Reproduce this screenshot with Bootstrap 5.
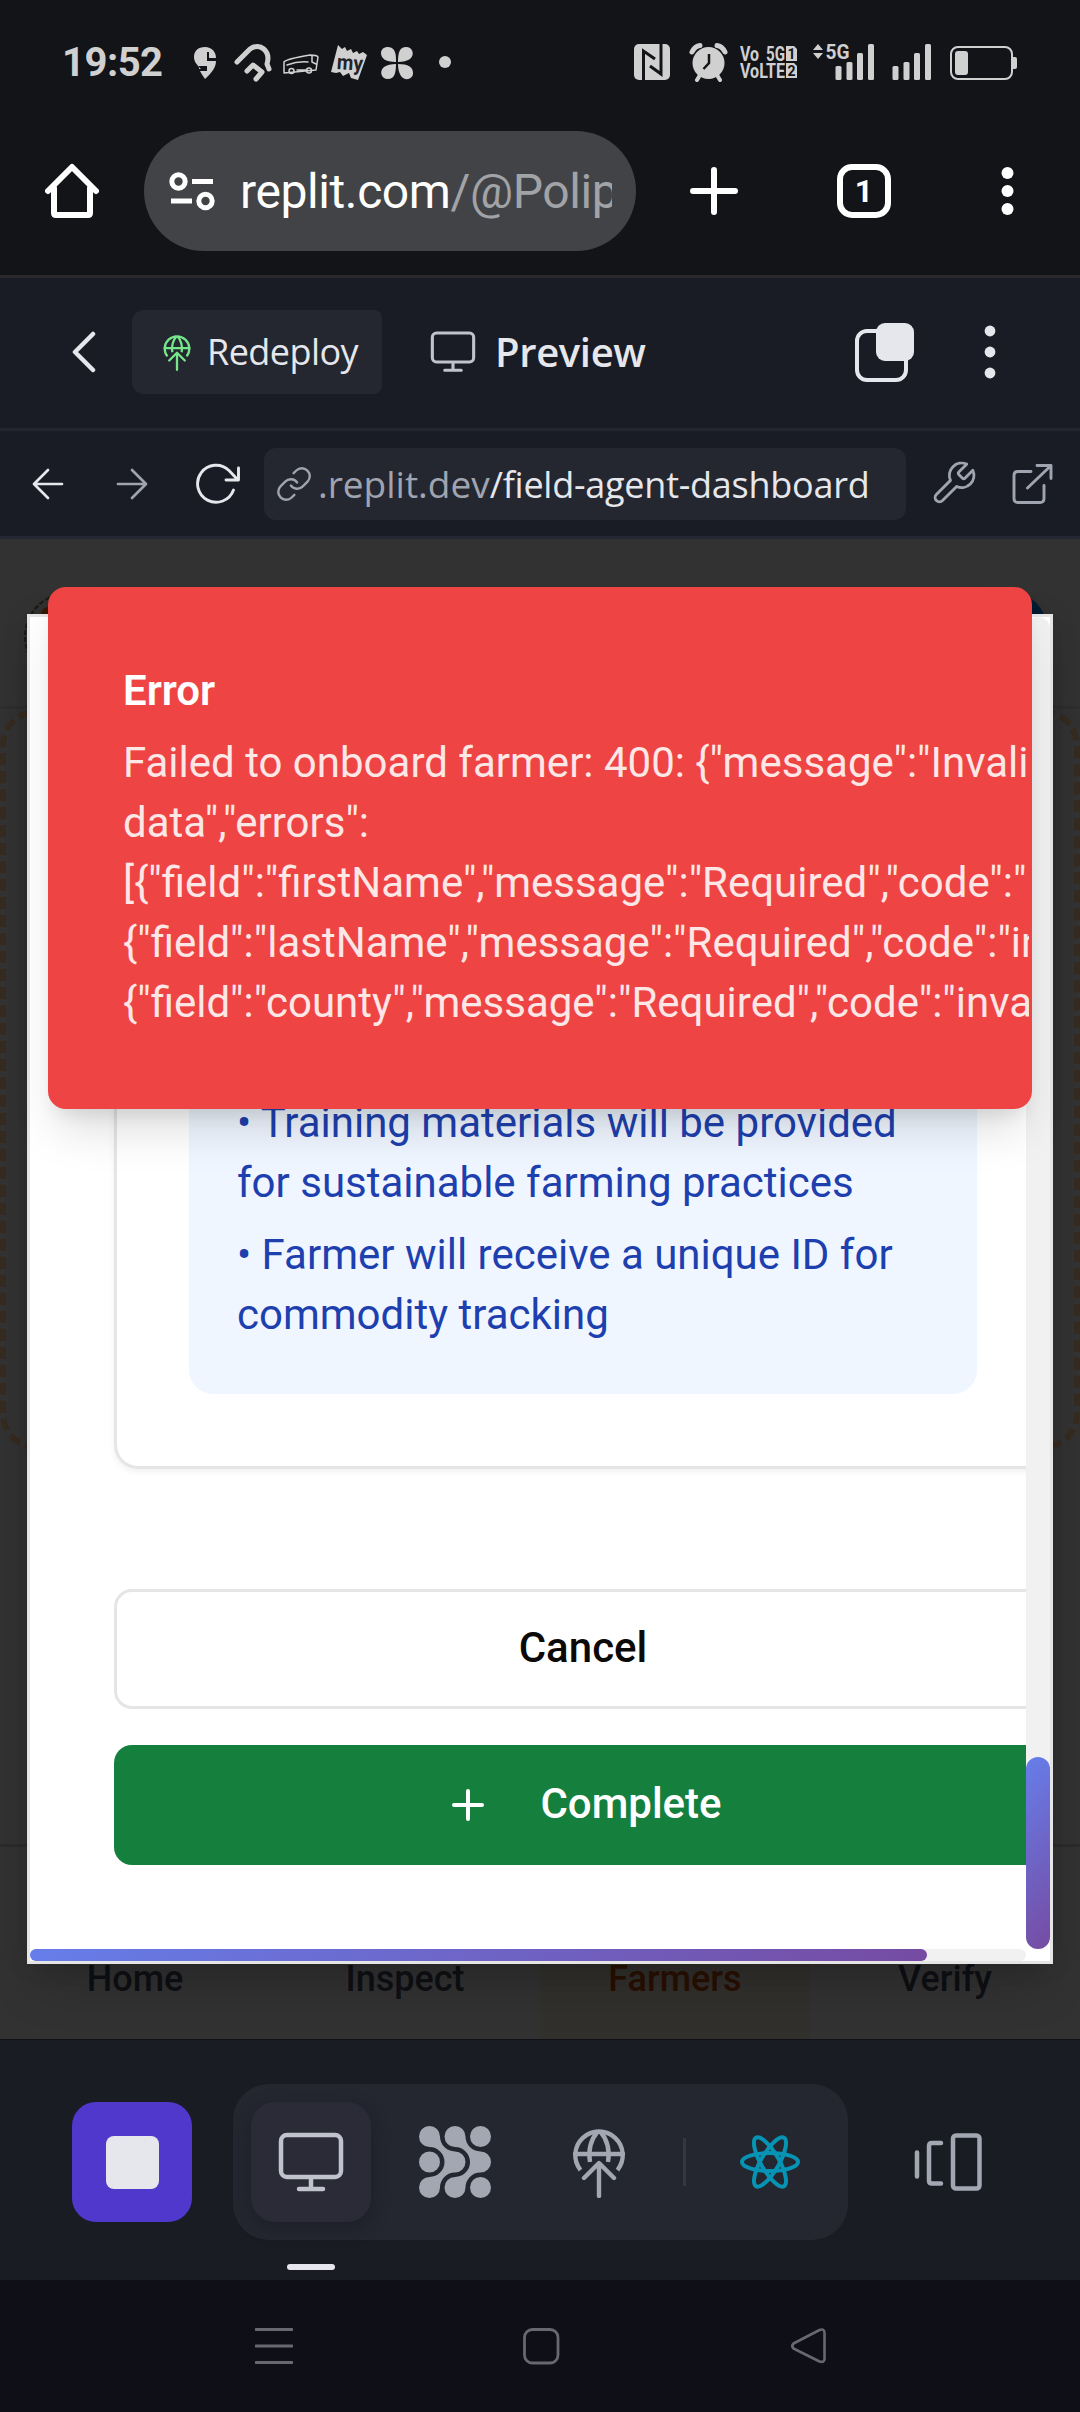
<!DOCTYPE html>
<html lang="en">
<head>
<meta charset="utf-8">
<meta name="viewport" content="width=device-width, initial-scale=1">
<title>Field agent dashboard preview</title>
<link rel="stylesheet" href="https://cdn.jsdelivr.net/npm/bootstrap@5.3.0/dist/css/bootstrap.min.css">
<style>
  body { width: 1080px; height: 2412px; overflow: hidden; background: #131418; font-family: Roboto, "Liberation Sans", sans-serif; }
  svg { display: block; flex: none; }
  .ln { fill: none; stroke: currentColor; stroke-linecap: round; stroke-linejoin: round; }
  /* system status bar */
  .statusbar { height: 120px; padding: 42px 60px 0 62px; color: #d0d0d0; }
  .clock { font-size: 40px; font-weight: 700; line-height: 42px; width: 119px; letter-spacing: -.5px; }
  .sys-icons { gap: 8px; }
  /* browser bar */
  .urlbar { height: 155px; padding: 0 66px 13px 45px; color: #fff; }
  .pill { width: 492px; height: 120px; margin-left: 45px; padding: 0 24px; border-radius: 60px; background: #424347; }
  .pill-text { margin-left: 24px; font-size: 48px; width: 372px; letter-spacing: -.4px; line-height: 64px; padding-top: 1px; }
  .pill-text span { color: #a2a3a7; }
  .gap-plus { margin-left: 54px; }
  .tab-count { width: 54px; height: 54px; border: 6px solid #fff; border-radius: 15px; font: 700 32px/43px Roboto, sans-serif; margin-left: 99px; }
  /* workspace bars */
  .plex { font-family: "Open Sans", "Noto Sans", sans-serif; }
  .tools { background: #1a1c25; color: #e6e7ec; }
  .tool-head { height: 153px; border-top: 3px solid #2a2a2d; padding: 0 84px 2px 72px; }
  .redeploy { width: 250px; height: 84px; margin-left: 35px; padding-left: 31px; border-radius: 12px 8px 8px 12px; background: #242730; font-size: 36px; letter-spacing: -.55px; gap: 16px; }
  .green { color: #76e68a; }
  .pv { font-size: 40px; font-weight: 600; letter-spacing: -.35px; margin-left: 19px; }
  .gap-dots { margin-left: 69px; }
  .tool-url { height: 111px; border-top: 3px solid #242731; border-bottom: 3px solid #242731; padding: 0 27px 0 31px; }
  .muted-c { color: #a0a4b0; }
  .gap-fwd { margin-left: 51px; }
  .gap-reload { margin-left: 45px; }
  .addr { width: 642px; height: 72px; margin-left: 23px; padding-left: 11px; border-radius: 12px; background: #242730; font-size: 37px; }
  .addr-text { margin-left: 5px; white-space: nowrap; }
  .host { letter-spacing: 0; }
  .path { font-size: 36px; letter-spacing: -.25px; }
  .gap-wrench { margin-left: 23px; }
  /* previewed app */
  .stage { height: 1500px; background: #323232; overflow: hidden; }
  .app-head { height: 170px; border-bottom: 3px solid #2e2e2e; padding: 51px 24px 0; }
  .app-head svg { overflow: visible; }
  .dashed { height: 741px; border: 6px dashed #362b20; border-radius: 36px; background: #333; }
  .app-nav { height: 195px; border-top: 3px solid #2b2b2b; font-size: 36px; font-weight: 500; color: #0e1014; }
  .app-nav > div { padding-top: 105px; line-height: 54px; }
  .app-nav .on { background: #31302d; color: #290f02; }
  .dlg { left: 27px; top: 75px; width: 1026px; height: 1350px; border: 3px solid #e5e5e5; background: #fff; box-shadow: 0 30px 45px -9px rgba(0,0,0,.18), 0 0 24px rgba(0,0,0,.1); }
  .dlg-body { width: 996px; height: 1332px; padding: 0 0 84px 84px; overflow: hidden; }
  .dlg-body > * { width: 938px; flex: none; }
  .panel { height: 780px; border: 3px solid #e5e5e5; border-radius: 24px; padding: 72px; box-shadow: 0 3px 6px rgba(0,0,0,.06); }
  .info { background: #eff6ff; border-radius: 24px; padding: 48px 48px 49px; height: 480px; color: #1e40af; font-size: 42px; line-height: 60px; gap: 12px; }
  .act { height: 120px; border-radius: 18px; font-size: 42px; font-weight: 500; }
  .act span { padding-bottom: 3px; }
  .act-cancel { border: 3px solid #e5e5e5; color: #0c0a09; margin: 120px 0 36px; }
  .act-done { background: #15803d; color: #fff; gap: 48px; }
  .vtrack { width: 24px; height: 1332px; background: #f1f1f1; border-radius: 12px; }
  .vthumb { height: 192px; border-radius: 12px; background: linear-gradient(135deg, #667eea, #764ba2); }
  .htrack { width: 996px; height: 12px; background: #f1f1f1; border-radius: 6px; }
  .hthumb { width: 897px; height: 12px; border-radius: 6px; background: linear-gradient(135deg, #667eea, #764ba2); }
  .alert-pop { left: 48px; top: 48px; width: 984px; height: 522px; border: 3px solid #ef4444; border-radius: 18px; background: #ef4444; padding: 71px 0 0 72px; overflow: hidden; color: #fff; font-size: 42px; line-height: 60px; box-shadow: 0 30px 45px -9px rgba(0,0,0,.13), 0 12px 18px -8px rgba(0,0,0,.1); }
  .alert-pop .msg { margin-top: 12px; white-space: pre; opacity: .87; }
  .semi { font-weight: 600; }
  /* workspace dock */
  .dock { height: 241px; background: #1a1c24; border-top: 1px solid #101116; padding: 44px 98px 0 72px; color: #a2a7b2; }
  .stop { width: 120px; height: 120px; border-radius: 24px; background: #5138cc; margin-top: 18px; }
  .stop i { width: 53px; height: 53px; border-radius: 8px; background: #e6e7ec; }
  .group { width: 615px; height: 156px; margin-left: 41px; padding-left: 18px; border-radius: 36px; background: #242730; }
  .active-tool { width: 120px; height: 120px; border-radius: 24px; background: #2a2b37; color: #c0c3cb; box-shadow: 0 6px 18px rgba(20,20,32,.45); }
  .bar-mark { left: 36px; top: 162px; width: 48px; height: 6px; border-radius: 3px; background: #e6e7ec; }
  .gap-globe { margin-left: 81px; }
  .sep { width: 3px; height: 48px; background: #343742; margin: 0 54px 0 57px; }
  .sysnav { height: 132px; background: #0e0f17; color: #68696e; padding: 0 253px 0 255px; }
</style>
<script src="https://cdn.jsdelivr.net/npm/bootstrap@5.3.0/dist/js/bootstrap.bundle.min.js"></script>
</head>
<body>
<svg width="0" height="0" class="position-absolute">
  <symbol id="globe" viewBox="572 2126 54 71"><g class="ln" stroke-width="4.4">
    <path d="M580.5 2169A23.700 23.700 0 1 1 617.500 2169" stroke-linecap="butt"/><path d="M575 2153H623"/>
    <path d="M598 2130Q587 2143 590 2161M600 2130Q611 2143 608 2161" stroke-linecap="butt"/>
    <path d="M599 2195V2163M584 2177L599 2162L614 2177"/></g></symbol>
  <symbol id="monitor" viewBox="278 2132 66 61"><g class="ln" stroke-width="4.500">
    <rect x="281" y="2135" width="60" height="42" rx="6"/><path d="M311 2178V2188M299 2189H323"/></g></symbol>
</svg>

<header class="statusbar d-flex align-items-start">
  <div class="clock">19:52</div>
  <svg width="48" height="40" viewBox="181 42 48 40"><path fill="currentColor" d="M205 47c7 0 11 5 11 11h-7v-6h-2v9h9c0 8-7 14-11 18-2-3-4-6-5-8h7v-5h-8v3h2c-5-5-7-8-7-12 0-6 4-10 11-10z"/></svg>
  <svg width="48" height="40" viewBox="229 42 48 40"><path class="ln" stroke-width="5" d="M237 62L250 49C260 42 271 51 267 64L269 69M247 71L253 65L262 72L256 79"/></svg>
  <svg width="48" height="40" viewBox="277 42 48 40"><g class="ln" stroke-width="1.500"><path d="M284 72V62Q286 59 310 55Q317 55 318 57L316 70L284 73M287 65Q298 61 308 62M312 56V62L316 64M297 70H307"/><circle cx="291.500" cy="71" r="2.500"/><circle cx="309" cy="70.500" r="2.500"/></g></svg>
  <svg width="48" height="40" viewBox="325 42 48 40"><path fill="currentColor" d="M338 45l4 4 3-2 2 4 4-2 2 4 4-2 2 3 4-2 4 3-9 25-7-2-2-5-6 3-3-4-4 1-5-1z"/><text x="337" y="70" font-size="21" font-weight="700" textLength="26" lengthAdjust="spacingAndGlyphs" fill="#222327" transform="rotate(4 350 62)">my</text></svg>
  <svg width="48" height="40" viewBox="373 42 48 40"><path fill="currentColor" d="M396 62C385 62 381 58 381 53C381 46 391 45 394 50C396 53 396 57 396 62zM398 62C398 52 400 47 406 47C413 47 415 55 410 59C407 61 403 62 398 62zM396 64C396 74 394 79 388 79C381 79 379 71 384 67C387 65 391 64 396 64zM398 64C408 64 413 67 413 73C413 80 404 81 401 76C399 73 398 69 398 64z"/></svg>
  <svg width="48" height="40" viewBox="421 42 48 40"><circle cx="445" cy="62" r="6" fill="currentColor"/></svg>
  <div class="sys-icons d-flex ms-auto">
    <svg width="48" height="40" viewBox="628 42 48 40"><rect x="634" y="44" width="36" height="36" rx="5" fill="currentColor"/><path d="M643.500 80V51L655 59M661 44V74L650 66" fill="none" stroke="#131418" stroke-width="3"/></svg>
    <svg width="48" height="40" viewBox="684 42 48 40"><circle cx="708.500" cy="63" r="16" fill="currentColor"/><path class="ln" stroke-width="5" stroke-linecap="butt" d="M692 52Q695 46 700 45.500M725 52Q722 46 717 45.500"/><path class="ln" stroke-width="4" d="M700 75L697 80M717 75L720 80"/><path d="M709 54V63L703.500 69" fill="none" stroke="#131418" stroke-width="2.500"/></svg>
    <svg width="62" height="40" viewBox="740 42 62 40" fill="currentColor" font-weight="700" font-size="20"><text x="740" y="61" textLength="19" lengthAdjust="spacingAndGlyphs">Vo</text><text x="766" y="61" textLength="19" lengthAdjust="spacingAndGlyphs">5G</text><text x="740" y="78" textLength="45" lengthAdjust="spacingAndGlyphs">VoLTE</text><path d="M786 46h8l3 3v12h-11zM786 63h8l3 3v12h-11z"/><g fill="#131418" font-size="14"><text x="787.500" y="58.500">1</text><text x="787.500" y="75.500">2</text></g></svg>
    <svg width="70" height="40" viewBox="808 42 70 40" fill="currentColor"><path d="M811 50l5-6 5 6zM811 53h10l-5 6z"/><text x="823.500" y="59" font-size="21" font-weight="700" textLength="24" lengthAdjust="spacingAndGlyphs">5G</text><rect x="833.500" y="66" width="6" height="14" rx="1.500"/><rect x="844.500" y="62" width="6" height="18" rx="1.500"/><rect x="855" y="53" width="6" height="27" rx="1.500"/><rect x="866" y="44" width="6" height="36" rx="1.500"/></svg>
    <svg width="48" height="40" viewBox="886 42 48 40" fill="currentColor"><rect x="890.500" y="66" width="6" height="14" rx="1.500"/><rect x="901.500" y="62" width="6" height="18" rx="1.500"/><rect x="912" y="53" width="6" height="27" rx="1.500"/><rect x="923" y="44" width="6" height="36" rx="1.500"/></svg>
    <svg width="76" height="40" viewBox="943 42 76 40"><rect x="950" y="47" width="61" height="32" rx="7" fill="none" stroke="currentColor" stroke-width="2"/><rect x="954" y="51" width="13" height="24" rx="3" fill="currentColor"/><path fill="currentColor" d="M1012 57h2q2 0 2 2v8q0 2-2 2h-2z"/></svg>
  </div>
</header>

<nav class="urlbar d-flex align-items-center">
  <svg width="54" height="56" viewBox="45 163 54 56"><path class="ln" stroke-width="6" d="M48 191L72 167L96 191M54 188V213Q54 215 56 215H88Q90 215 90 213V188"/></svg>
  <div class="pill d-flex align-items-center">
    <svg width="48" height="40" viewBox="168 171 48 40"><g fill="none" stroke="currentColor" stroke-width="5"><circle cx="178.500" cy="181.500" r="6.700"/><path d="M192 181.500H213M171 201H192"/><circle cx="205.500" cy="201" r="6.700"/></g></svg>
    <div class="pill-text text-nowrap overflow-hidden">replit.com<span>/@Polip</span></div>
  </div>
  <svg class="gap-plus" width="48" height="48" viewBox="0 0 48 48"><path class="ln" stroke-width="6" d="M24 3V45M3 24H45"/></svg>
  <div class="tab-count text-center">1</div>
  <svg class="ms-auto" width="13" height="48" viewBox="0 0 13 48" fill="currentColor"><circle cx="6.500" cy="6" r="6"/><circle cx="6.500" cy="24" r="6"/><circle cx="6.500" cy="42" r="6"/></svg>
</nav>

<section class="tools plex">
  <div class="tool-head d-flex align-items-center">
    <svg width="25" height="44" viewBox="72 330 25 44"><path class="ln" stroke-width="4.500" d="M93 334L75 352L93 370"/></svg>
    <div class="redeploy d-flex align-items-center"><svg class="green" width="28" height="37"><use href="#globe"/></svg><span>Redeploy</span></div>
    <svg class="ms-5" width="46" height="42" color="#c0c3cb"><use href="#monitor"/></svg>
    <div class="pv">Preview</div>
    <svg class="ms-auto" width="61" height="61" viewBox="854 321 61 61"><rect x="857" y="330" width="49" height="49" rx="10" fill="none" stroke="currentColor" stroke-width="4"/><rect x="876" y="322" width="38" height="38" rx="9" fill="currentColor"/></svg>
    <svg class="gap-dots" width="12" height="54" viewBox="0 0 12 54" fill="currentColor"><circle cx="6" cy="6" r="5.400"/><circle cx="6" cy="27" r="5.400"/><circle cx="6" cy="48" r="5.400"/></svg>
  </div>
  <div class="tool-url d-flex align-items-center">
    <svg width="34" height="34" viewBox="31 467 34 34"><path class="ln" stroke-width="2.700" d="M62 484H34M48 470L34 484L48 498"/></svg>
    <svg class="muted-c gap-fwd" width="34" height="34" viewBox="116 467 34 34"><path class="ln" stroke-width="2.700" d="M118 484H146M132 470L146 484L132 498"/></svg>
    <svg class="gap-reload" width="46" height="44" viewBox="195 462 46 44"><path class="ln" stroke-width="2.900" d="M233.500 490A18.500 18.500 0 1 1 229 470.500L238 480M238.500 468V480H226"/></svg>
    <div class="addr d-flex align-items-center">
      <svg class="muted-c" width="38" height="38" viewBox="0 0 24 24"><g class="ln" stroke-width="1.500"><path d="M10 13a5 5 0 0 0 7.540.540l3-3a5 5 0 0 0-7.070-7.070l-1.720 1.710"/><path d="M14 11a5 5 0 0 0-7.540-.540l-3 3a5 5 0 0 0 7.070 7.070l1.710-1.710"/></g></svg>
      <div class="addr-text"><span class="host muted-c">.replit.dev</span><span class="path">/field-agent-dashboard</span></div>
    </div>
    <svg class="muted-c gap-wrench" width="49" height="49" viewBox="0 0 24 24"><path class="ln" stroke-width="1.400" d="M14.700 6.300a1 1 0 0 0 0 1.400l1.600 1.600a1 1 0 0 0 1.400 0l3.770-3.770a6 6 0 0 1-7.940 7.940l-6.910 6.910a2.120 2.120 0 0 1-3-3l6.910-6.910a6 6 0 0 1 7.940-7.940l-3.760 3.760z"/></svg>
    <svg class="muted-c ms-auto" width="42" height="42" viewBox="1011 463 42 42"><path class="ln" stroke-width="2.900" d="M1031 471.500H1018q-4 0-4 4v23q0 4 4 4h22q4 0 4-4v-13M1027.500 488L1050.500 466M1037 465.500H1051V478.500"/></svg>
  </div>
</section>

<main class="stage position-relative d-flex flex-column">
  <div class="app-head d-flex justify-content-between">
    <svg width="90" height="90" viewBox="0 0 90 90"><circle cx="45" cy="47" r="44" fill="none" stroke="#1c1a14" stroke-width="2" stroke-dasharray="5 2"/><circle cx="24" cy="24" r="7" fill="#3a1c05"/></svg>
    <svg width="84" height="84" viewBox="0 0 84 84"><circle cx="34" cy="42" r="42" fill="#031d33"/></svg>
  </div>
  <div class="dashed"></div>
  <div class="app-nav row g-0 mt-auto text-center">
    <div class="col-3">Home</div><div class="col-3">Inspect</div><div class="col-3 on">Farmers</div><div class="col-3">Verify</div>
  </div>

  <div class="dlg position-absolute">
    <div class="d-flex">
      <div class="dlg-body d-flex flex-column justify-content-end">
        <div class="panel d-flex flex-column justify-content-end">
          <div class="info d-flex flex-column justify-content-end">
            <div>• Training materials will be provided<br>for sustainable farming practices</div>
            <div>• Farmer will receive a unique ID for<br>commodity tracking</div>
          </div>
        </div>
        <div class="act act-cancel d-flex align-items-center justify-content-center"><span>Cancel</span></div>
        <div class="act act-done d-flex align-items-center justify-content-center">
          <svg width="48" height="48" viewBox="0 0 24 24"><path class="ln" stroke-width="2" d="M5 12h14M12 5v14"/></svg><span>Complete</span>
        </div>
      </div>
      <div class="vtrack d-flex flex-column justify-content-end"><div class="vthumb"></div></div>
    </div>
    <div class="htrack"><div class="hthumb"></div></div>
  </div>

  <div class="alert-pop position-absolute" role="alert">
    <div class="semi">Error</div>
    <div class="msg">Failed to onboard farmer: 400: {"message":"Invalid
data","errors":
[{"field":"firstName","message":"Required","code":"invalid
{"field":"lastName","message":"Required","code":"invalid
{"field":"county","message":"Required","code":"invalid</div>
  </div>
</main>

<footer class="dock d-flex align-items-start">
  <div class="stop d-flex align-items-center justify-content-center"><i></i></div>
  <div class="group d-flex align-items-center">
    <div class="active-tool position-relative d-flex align-items-center justify-content-center">
      <svg width="66" height="61"><use href="#monitor"/></svg>
      <span class="bar-mark position-absolute"></span>
    </div>
    <svg class="ms-5" width="72" height="72" viewBox="419 2126 72 72" fill="currentColor">
      <circle cx="429.500" cy="2162" r="10.500"/><circle cx="480.500" cy="2136.500" r="10.500"/><circle cx="480.500" cy="2187.500" r="10.500"/>
      <path id="chain" d="M440 2136.500A15 15 0 0 0 455 2151.500A10.500 10.500 0 0 1 455 2172.500A15 15 0 0 0 440 2187.500A10.500 10.500 0 1 1 429.500 2177A15 15 0 0 0 429.500 2147A10.500 10.500 0 1 1 440 2136.500z"/>
      <use href="#chain" x="25.500"/>
    </svg>
    <svg class="gap-globe" width="54" height="71"><use href="#globe"/></svg>
    <div class="sep"></div>
    <svg width="60" height="58" viewBox="-30 -29 60 58" color="#0794b4"><g class="ln" stroke-width="4"><ellipse rx="28" ry="9"/><ellipse rx="28" ry="9" transform="rotate(60)"/><ellipse rx="28" ry="9" transform="rotate(120)"/></g></svg>
  </div>
  <svg class="ms-auto" width="68" height="156" viewBox="914 2084 68 156"><path class="ln" stroke-width="4.500" d="M917 2152.500V2176.500M941 2143H932q-3 0-3 3v34.500q0 3 3 3H941"/><rect class="ln" stroke-width="4.500" x="953" y="2135.500" width="26.500" height="53" rx="3"/></svg>
</footer>

<div class="sysnav d-flex align-items-center justify-content-between">
  <svg width="38" height="38" viewBox="0 0 38 38"><path class="ln" stroke-width="3" stroke-linecap="butt" d="M1 2.500H37M1 19H37M1 35.500H37"/></svg>
  <svg width="38" height="38" viewBox="0 0 38 38"><rect class="ln" stroke-width="2.800" x="2.500" y="2.500" width="33.500" height="33.500" rx="8"/></svg>
  <svg width="38" height="38" viewBox="788 2327 38 38"><path class="ln" stroke-width="2.600" d="M792.500 2343.500L818.500 2330Q823.500 2328 823.500 2333V2359Q823.500 2363 818.500 2361.500L792.500 2348.500Q790 2346 792.500 2343.500z"/></svg>
</div>
</body>
</html>
